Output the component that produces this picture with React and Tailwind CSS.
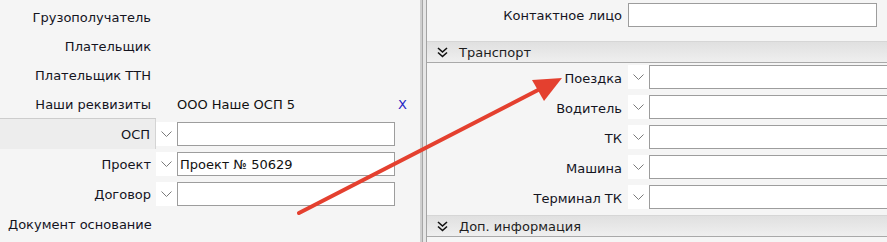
import React from "react";

const font = { fontFamily: '"DejaVu Sans", Verdana, sans-serif' };

function Chevron() {
  return (
    <div className="w-[21px] h-[24px] bg-white flex items-center justify-center">
      <svg width="11" height="7" viewBox="0 0 11 7">
        <polyline points="0.5,0.5 5.5,5.5 10.5,0.5" fill="none" stroke="#7a7a7a" strokeWidth="1" />
      </svg>
    </div>
  );
}

function DoubleChevron() {
  return (
    <svg width="11" height="11" viewBox="0 0 11 11">
      <polyline points="1,1 5.5,5 10,1" fill="none" stroke="#111" strokeWidth="1.6" />
      <polyline points="1,5.5 5.5,9.5 10,5.5" fill="none" stroke="#111" strokeWidth="1.6" />
    </svg>
  );
}

function LeftRow({ label, children }) {
  return (
    <div className="flex items-center h-[29px] pt-[2px]">
      <div className="w-[155px] shrink-0 text-right pr-[4px] text-[#14141e]">{label}</div>
      {children}
    </div>
  );
}

function LeftInputRow({ label, value, active }) {
  return (
    <div className="flex h-[30px]">
      <div
        className={`w-[155px] shrink-0 flex items-center justify-end pr-[4px] text-[#14141e] ${
          active ? "bg-[#ededed] border-r border-[#d4d4d4] w-[156px] pr-[5px]" : ""
        }`}
      >
        {label}
      </div>
      <div className={`flex pt-[3px] ${active ? "" : "pl-[1px]"}`}>
        <Chevron />
        <div className="w-[218px] h-[24px] bg-white border border-[#9d9d9d] flex items-center pl-[2px] text-[#111]">
          {value}
        </div>
      </div>
    </div>
  );
}

function RightInputRow({ label }) {
  return (
    <div className="flex h-[30px]">
      <div className="w-[201px] shrink-0 flex items-center justify-end pr-[6px] text-[#14141e]">{label}</div>
      <div className="flex pt-[2px] flex-1">
        <Chevron />
        <div className="flex-1 h-[24px] bg-white border border-r-0 border-[#9d9d9d]" />
      </div>
    </div>
  );
}

function SectionHeader({ title }) {
  return (
    <div className="h-[22px] flex items-center gap-[11px] pl-[10px] border-t border-[#d6d6d6] border-b border-b-[#a9a9a9] bg-gradient-to-b from-[#e0e0e0] to-[#efefef] text-[#1e1e1e]">
      <DoubleChevron />
      <span>{title}</span>
    </div>
  );
}

export default function App() {
  return (
    <div className="relative w-[887px] h-[242px] overflow-hidden bg-[#f5f5f5] text-[13px] leading-none flex" style={font}>
      {/* left panel */}
      <div className="w-[420px] shrink-0 pt-[2px]">
        <LeftRow label="Грузополучатель" />
        <LeftRow label="Плательщик" />
        <LeftRow label="Плательщик ТТН" />
        <LeftRow label="Наши реквизиты">
          <div className="flex-1 flex items-center justify-between pl-[22px] pr-[13px]">
            <span className="text-[#111]">ООО Наше ОСП 5</span>
            <span className="text-[#2626c4]">X</span>
          </div>
        </LeftRow>
        <div className="w-[156px] h-px bg-[#cdcdcd]" />
        <LeftInputRow label="ОСП" value="" active />
        <LeftInputRow label="Проект" value="Проект № 50629" />
        <LeftInputRow label="Договор" value="" />
        <div className="h-[30px] flex items-center pl-[8px] text-[#14141e]">Документ основание</div>
      </div>

      {/* splitter */}
      <div className="w-[6px] shrink-0 flex">
        <div className="w-[2px] bg-[#cfcfcf]" />
        <div className="w-[1px] bg-[#a6a6a6]" />
        <div className="flex-1 bg-[#e6e6e6]" />
      </div>

      {/* right panel */}
      <div className="flex-1 border-l border-[#a3a3a3] flex flex-col">
        <div className="flex h-[41px]">
          <div className="w-[201px] shrink-0 h-[30px] flex items-center justify-end pr-[6px] text-[#14141e]">
            Контактное лицо
          </div>
          <div className="pt-[3px]">
            <div className="w-[249px] h-[24px] bg-white border border-[#9d9d9d]" />
          </div>
        </div>
        <SectionHeader title="Транспорт" />
        <div>
          <RightInputRow label="Поездка" />
          <RightInputRow label="Водитель" />
          <RightInputRow label="ТК" />
          <RightInputRow label="Машина" />
          <RightInputRow label="Терминал ТК" />
        </div>
        <div className="h-[2px]" />
        <SectionHeader title="Доп. информация" />
      </div>

      {/* annotation arrow */}
      <svg className="absolute inset-0 pointer-events-none" width="887" height="242" viewBox="0 0 887 242">
        <line x1="299" y1="213" x2="540" y2="89" stroke="#e4402f" strokeWidth="4" strokeLinecap="round" />
        <polygon points="562,78 532,80 544,101" fill="#e4402f" />
      </svg>
    </div>
  );
}
